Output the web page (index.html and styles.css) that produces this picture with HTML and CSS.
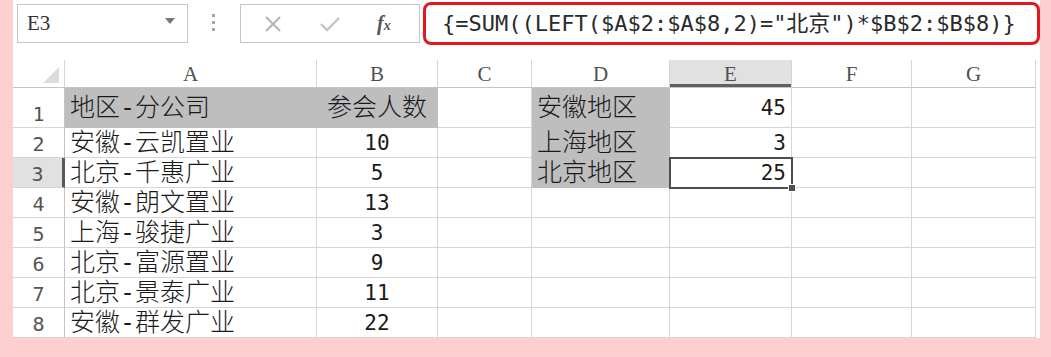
FILE: index.html
```html
<!DOCTYPE html>
<html lang="zh-CN">
<head>
    <meta charset="UTF-8">
    <title>SUM LEFT</title>
    <link rel="stylesheet" href="styles.css">
</head>
<body>
    <div class="sheet">
        <div class="formula-bar">
            <div class="name-box">
                <span>E3</span>
                <span class="caret"></span>
            </div>
            <div class="grip"><i></i><i></i><i></i></div>
            <div class="fx-buttons">
                <svg width="20" height="20" viewBox="0 0 20 20"><path d="M3 3 L17 17 M17 3 L3 17" stroke="#b4b4b4" stroke-width="2" fill="none"/></svg>
                <svg width="22" height="20" viewBox="0 0 22 20"><path d="M2 10 L8 16 L20 4" stroke="#c4c4c4" stroke-width="2.4" fill="none"/></svg>
                <span class="fx">f<span>x</span></span>
            </div>
            <div class="formula">{=SUM((LEFT($A$2:$A$8,2)="北京")*$B$2:$B$8)}</div>
        </div>

        <table class="grid">
            <colgroup>
                <col style="width:52px">
                <col style="width:252px">
                <col style="width:121px">
                <col style="width:94px">
                <col style="width:138px">
                <col style="width:122px">
                <col style="width:120px">
                <col style="width:124px">
            </colgroup>
            <tr class="col-head">
                <td class="corner"><span class="tri"></span></td>
                <td>A</td><td>B</td><td>C</td><td>D</td><td class="active">E</td><td>F</td><td>G</td>
            </tr>
            <tr class="first">
                <td class="row-head">1</td>
                <td class="txt fill">地区-分公司</td>
                <td class="txt fill center">参会人数</td>
                <td></td>
                <td class="txt fill">安徽地区</td>
                <td class="num right">45</td>
                <td></td><td></td>
            </tr>
            <tr>
                <td class="row-head">2</td>
                <td class="txt">安徽-云凯置业</td>
                <td class="num center">10</td>
                <td></td>
                <td class="txt fill">上海地区</td>
                <td class="num right">3</td>
                <td></td><td></td>
            </tr>
            <tr>
                <td class="row-head active">3</td>
                <td class="txt">北京-千惠广业</td>
                <td class="num center">5</td>
                <td></td>
                <td class="txt fill">北京地区</td>
                <td class="num right selected">25</td>
                <td></td><td></td>
            </tr>
            <tr>
                <td class="row-head">4</td>
                <td class="txt">安徽-朗文置业</td>
                <td class="num center">13</td>
                <td></td><td></td><td></td><td></td><td></td>
            </tr>
            <tr>
                <td class="row-head">5</td>
                <td class="txt">上海-骏捷广业</td>
                <td class="num center">3</td>
                <td></td><td></td><td></td><td></td><td></td>
            </tr>
            <tr>
                <td class="row-head">6</td>
                <td class="txt">北京-富源置业</td>
                <td class="num center">9</td>
                <td></td><td></td><td></td><td></td><td></td>
            </tr>
            <tr>
                <td class="row-head">7</td>
                <td class="txt">北京-景泰广业</td>
                <td class="num center">11</td>
                <td></td><td></td><td></td><td></td><td></td>
            </tr>
            <tr>
                <td class="row-head">8</td>
                <td class="txt">安徽-群发广业</td>
                <td class="num center">22</td>
                <td></td><td></td><td></td><td></td><td></td>
            </tr>
        </table>
    </div>
</body>
</html>
```

FILE: styles.css
```css
body {
    margin: 0;
    background-color: #fdcfcf;
    height: 357px;
    overflow: hidden;
}
.sheet {
    margin-left: 13px;
    width: 1027px;
    height: 338px;
    background-color: #fff;
    overflow: hidden;
}

/* formula bar */
.formula-bar {
    display: flex;
    align-items: flex-start;
    height: 60px;
}
.name-box {
    box-sizing: border-box;
    display: flex;
    align-items: center;
    justify-content: space-between;
    margin: 4px 0 0 4px;
    width: 171px;
    height: 39px;
    padding: 0 12px 0 9px;
    border: 1px solid #c6c6c6;
    font-family: "Liberation Serif", serif;
    font-size: 21px;
    color: #333;
}
.caret {
    width: 0;
    height: 0;
    margin-bottom: 6px;
    border-left: 5px solid transparent;
    border-right: 5px solid transparent;
    border-top: 6px solid #777;
}
.grip {
    display: flex;
    flex-direction: column;
    gap: 4px;
    margin: 14px 0 0 24px;
    width: 28px;
}
.grip i {
    width: 3px;
    height: 3px;
    background-color: #a8a8a8;
}
.fx-buttons {
    box-sizing: border-box;
    display: flex;
    align-items: center;
    gap: 36px;
    margin-top: 4px;
    width: 180px;
    height: 39px;
    padding-left: 22px;
    border: 1px solid #c6c6c6;
}
.fx {
    font-family: "Liberation Serif", serif;
    font-style: italic;
    font-weight: bold;
    font-size: 20px;
    color: #555;
}
.fx span {
    font-size: 14px;
}
.formula {
    box-sizing: border-box;
    flex: 1;
    margin: 2px 0 0 3px;
    height: 43px;
    padding: 0 0 0 16px;
    border: 3px solid #e5171d;
    border-radius: 8px;
    font-family: "DejaVu Sans Mono", "Noto Sans CJK SC", monospace;
    font-size: 22px;
    line-height: 37px;
    color: #2a2a2a;
    white-space: nowrap;
}

/* grid */
.grid {
    table-layout: fixed;
    width: 1023px;
    border-collapse: separate;
    border-spacing: 0;
}
.grid td {
    box-sizing: border-box;
    padding: 0 5px;
    border-right: 1px solid #d6d6d6;
    border-bottom: 1px solid #d6d6d6;
    white-space: nowrap;
    line-height: 26px;
    color: #1a1a1a;
}
.grid tr {
    height: 30px;
}
.grid tr.col-head {
    height: 28px;
}
.grid tr.first {
    height: 40px;
}
.col-head td {
    text-align: center;
    vertical-align: bottom;
    font-family: "Liberation Serif", serif;
    font-size: 21px;
}
.grid .col-head td {
    border-bottom-color: #c4c4c4;
    color: #505050;
}
.grid .col-head td.active {
    background-color: #e1e1e1;
    box-shadow: inset 0 -3px 0 #606060;
}
.grid td.corner {
    text-align: right;
    line-height: 0;
    padding: 0 5px 4px 0;
}
.tri {
    display: inline-block;
    width: 0;
    height: 0;
    border-left: 16px solid transparent;
    border-bottom: 16px solid #dcdcdc;
}
.row-head {
    text-align: center;
    vertical-align: bottom;
    font-family: "DejaVu Sans Mono", monospace;
    font-size: 20px;
}
.grid td.row-head {
    border-right-color: #c4c4c4;
    color: #555;
}
.grid td.row-head.active {
    background-color: #e1e1e1;
    border-right: 3px solid #5a5a5a;
}
.txt {
    font-family: "DejaVu Sans Mono", "Noto Sans CJK SC", sans-serif;
    font-size: 25px;
    font-weight: 300;
    vertical-align: middle;
}
.num {
    font-family: "DejaVu Sans Mono", monospace;
    font-size: 21px;
    vertical-align: middle;
}
.center {
    text-align: center;
}
.right {
    text-align: right;
}
.grid td.fill {
    background-color: #bebebe;
    border-color: #bebebe;
}
.grid td.selected {
    position: relative;
    outline: 2px solid #4e4e4e;
    outline-offset: -1px;
}
.selected::after {
    content: "";
    position: absolute;
    right: -5px;
    bottom: -5px;
    width: 6px;
    height: 6px;
    background-color: #4e4e4e;
    border: 1px solid #fff;
    z-index: 1;
}
```
